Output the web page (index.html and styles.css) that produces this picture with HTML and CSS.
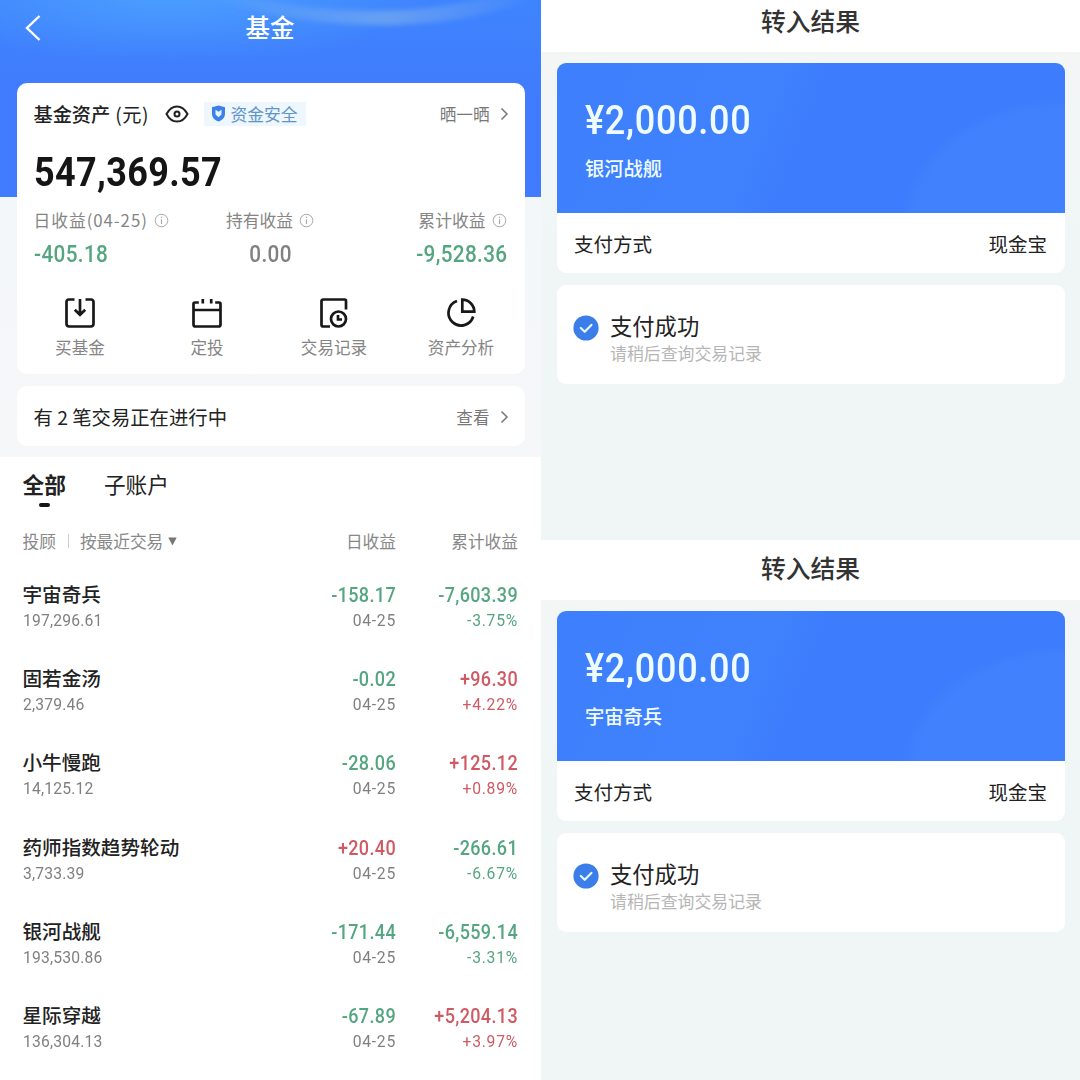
FILE: index.html
```html
<!DOCTYPE html>
<html lang="zh-CN">
<head>
<meta charset="utf-8">
<title>基金</title>
<link rel="stylesheet" href="styles.css">
</head>
<body>
<svg class="defs" width="0" height="0" aria-hidden="true">
  <symbol id="chevron" viewBox="0 0 9 14"><path d="M1.500 1.500 7 7l-5.500 5.500" fill="none" stroke="currentColor" stroke-width="1.500"/></symbol>
  <symbol id="info" viewBox="0 0 15 15"><circle cx="7.500" cy="7.500" r="6.300" fill="none" stroke="currentColor"/><path d="M7.500 6.300v4.700M7.500 3.800v1.300" stroke="currentColor" stroke-width="1.200"/></symbol>
  <symbol id="check" viewBox="0 0 26 26"><circle cx="13" cy="13" r="12.600" fill="#3b7de9"/><path d="m7.800 13 3.900 3.800 6.700-6.900" fill="none" stroke="#e8f8ff" stroke-width="2.200" stroke-linecap="round" stroke-linejoin="round"/></symbol>
</svg>
<div class="board">
  <main class="fund">
    <section class="hero">
      <svg class="hero-art" viewBox="0 0 541 197" preserveAspectRatio="none" aria-hidden="true">
        <defs>
          <radialGradient id="glow"><stop offset="0" stop-color="#4b9eff"/><stop offset="1" stop-color="#4b9eff" stop-opacity="0"/></radialGradient>
          <linearGradient id="ribbon"><stop offset="0" stop-color="#7fb2ee" stop-opacity="0"/><stop offset=".55" stop-color="#7fb2ee" stop-opacity=".6"/><stop offset="1" stop-color="#7fb2ee" stop-opacity="0"/></linearGradient>
          <filter id="soft"><feGaussianBlur stdDeviation="2.500"/></filter>
        </defs>
        <ellipse cx="170" cy="-5" rx="260" ry="68" fill="url(#glow)"/>
        <path d="M200-6Q285 25 380 25T540-6H500Q440 11 370 11T230-8Z" fill="url(#ribbon)" filter="url(#soft)"/>
      </svg>
      <header class="topbar">
        <svg class="back" viewBox="0 0 18 28"><path d="M15.500 2 3 14l12.500 12" fill="none" stroke="#fff" stroke-width="2.400"/></svg>
        <h1>基金</h1>
      </header>
      <div class="card assets">
        <div class="assets-head">
          <span class="assets-title">基金资产<span class="unit">(元)</span></span>
          <svg class="eye" viewBox="0 0 24 18"><path d="M1.500 9C4 4.300 7.600 1.400 12 1.400S20 4.300 22.500 9C20 13.700 16.400 16.600 12 16.600S4 13.700 1.500 9Z" fill="none" stroke="#222" stroke-width="2"/><circle cx="12" cy="9" r="2.500" fill="none" stroke="#222" stroke-width="2"/></svg>
          <span class="safe"><svg viewBox="0 0 15 17"><path d="M7.500.5 14 2.300v6.200c0 4.200-2.600 6.700-6.500 8C3.600 15.200 1 12.700 1 8.500V2.300Z" fill="#3c80e8"/><path d="m4.500 4.700 3 2 3-2v4.800l-3 2.700-3-2.700Z" fill="#e4f4ff"/></svg>资金安全</span>
          <a class="more">晒一晒<svg><use href="#chevron"/></svg></a>
        </div>
        <div class="total num">547,369.57</div>
        <div class="stats">
          <div class="stat"><div class="label"><span class="dated">日收益(04-25)</span><svg><use href="#info"/></svg></div><div class="value num green">-405.18</div></div>
          <div class="stat center"><div class="label">持有收益<svg><use href="#info"/></svg></div><div class="value num">0.00</div></div>
          <div class="stat right"><div class="label">累计收益<svg><use href="#info"/></svg></div><div class="value num green">-9,528.36</div></div>
        </div>
        <nav class="actions">
          <a><svg viewBox="0 0 30 30"><path d="M9.500 1.500H4a2.500 2.500 0 0 0-2.500 2.500v22A2.500 2.500 0 0 0 4 28.500h22a2.500 2.500 0 0 0 2.500-2.500V4A2.500 2.500 0 0 0 26 1.500h-5.500M15 1v15.500M9.800 11.800l5.200 5 5.200-5"/></svg>买基金</a>
          <a><svg viewBox="0 0 30 30"><path d="M6.800 4.500H3a1.500 1.500 0 0 0-1.500 1.500v20.500A2 2 0 0 0 3.500 28.500h23a2 2 0 0 0 2-2V6A1.500 1.500 0 0 0 27 4.500h-3.800M1.500 12h27M10.800 1v4.500M19.200 1v4.500"/></svg>定投</a>
          <a><svg viewBox="0 0 30 30"><path d="M27 11.500V2.800a1.300 1.300 0 0 0-1.300-1.300H4.300A1.800 1.800 0 0 0 2.500 3.300v23.400a1.800 1.800 0 0 0 1.800 1.800H11"/><circle cx="19.500" cy="21" r="7.500"/><path d="M19 17v4.500h4"/></svg>交易记录</a>
          <a><svg viewBox="0 0 30 30"><path d="M11 3A12.600 12.600 0 1 0 27.200 18.500M16.300 1.700v12h12A12 12 0 0 0 16.300 1.700Z"/></svg>资产分析</a>
        </nav>
      </div>
    </section>
    <section class="card pending"><span>有 2 笔交易正在进行中</span><a class="more">查看<svg><use href="#chevron"/></svg></a></section>
    <section class="holdings">
      <nav class="tabs"><a class="active">全部</a><a>子账户</a></nav>
      <div class="filters"><span>投顾<i class="bar"></i>按最近交易<svg class="caret" viewBox="0 0 9 9"><path d="M.3.5h8.400L4.500 8.500Z" fill="#777"/></svg></span><span>日收益</span><span>累计收益</span></div>
      <div class="row"><b>宇宙奇兵</b><strong class="green">-158.17</strong><strong class="green">-7,603.39</strong><small>197,296.61</small><small>04-25</small><small class="green">-3.75%</small></div>
      <div class="row"><b>固若金汤</b><strong class="green">-0.02</strong><strong class="red">+96.30</strong><small>2,379.46</small><small>04-25</small><small class="red">+4.22%</small></div>
      <div class="row"><b>小牛慢跑</b><strong class="green">-28.06</strong><strong class="red">+125.12</strong><small>14,125.12</small><small>04-25</small><small class="red">+0.89%</small></div>
      <div class="row"><b>药师指数趋势轮动</b><strong class="red">+20.40</strong><strong class="green">-266.61</strong><small>3,733.39</small><small>04-25</small><small class="green">-6.67%</small></div>
      <div class="row"><b>银河战舰</b><strong class="green">-171.44</strong><strong class="green">-6,559.14</strong><small>193,530.86</small><small>04-25</small><small class="green">-3.31%</small></div>
      <div class="row"><b>星际穿越</b><strong class="green">-67.89</strong><strong class="red">+5,204.13</strong><small>136,304.13</small><small>04-25</small><small class="red">+3.97%</small></div>
    </section>
  </main>
  <aside class="results">
    <section class="result first">
      <h2>转入结果</h2>
      <div class="receipt">
        <div class="banner"><div class="amount num">¥2,000.00</div><div class="product">银河战舰</div></div>
        <div class="method"><span>支付方式</span><span>现金宝</span></div>
      </div>
      <div class="status"><svg><use href="#check"/></svg><div><p>支付成功</p><p class="hint">请稍后查询交易记录</p></div></div>
    </section>
    <section class="result">
      <h2>转入结果</h2>
      <div class="receipt">
        <div class="banner"><div class="amount num">¥2,000.00</div><div class="product">宇宙奇兵</div></div>
        <div class="method"><span>支付方式</span><span>现金宝</span></div>
      </div>
      <div class="status"><svg><use href="#check"/></svg><div><p>支付成功</p><p class="hint">请稍后查询交易记录</p></div></div>
    </section>
  </aside>
</div>
</body>
</html>
```
FILE: styles.css
```css
* { box-sizing: border-box; }
body { margin: 0; font-family: "Noto Sans CJK SC", sans-serif; color: #222; background: #fff; }
h1, h2, p { margin: 0; font-weight: 500; }
svg { display: block; flex: none; }
.defs { position: absolute; }
.board { display: grid; grid-template-columns: 541px 539px; width: 1080px; height: 1080px; overflow: hidden; }

/* Figures are set narrow, with open tracking */
.num, .row strong, .row small { font-family: Roboto, "Noto Sans CJK SC", sans-serif; transform: scaleX(.9); transform-origin: left; }
.green { color: #54a580 !important; }
.red { color: #cf5a63 !important; }

.fund { background: linear-gradient(#f3f7fa, #f5f7f9 457px, #fff 457px); height: 1080px; overflow: hidden; }
.hero { position: relative; padding: 0 16.500px; background: linear-gradient(#3f84fe, #407cfd 90px, #407cfd 197px, transparent 197px); }
.hero-art { position: absolute; left: 0; top: 0; width: 541px; height: 197px; }
.topbar { position: relative; display: grid; grid-template-columns: 40px 1fr 40px; align-items: center; height: 55px; margin-bottom: 28px; }
.back { width: 18px; height: 28px; margin-left: 7px; }
.topbar h1 { text-align: center; color: #fff; font-size: 24.500px; line-height: 36px; margin: -2px 1px 0 0; }
.card { position: relative; background: #fff; border-radius: 10px; }
.assets { width: 508px; height: 291px; padding: 16px 17px 0; }
.assets-head { display: flex; align-items: center; height: 29px; }
.assets-title { width: 131px; font-size: 19.200px; font-weight: 500; white-space: nowrap; }
.unit { margin-left: 5px; font-weight: 400; letter-spacing: .5px; }
.eye { width: 24px; height: 18px; }
.safe { display: flex; align-items: center; gap: 5px; width: 102px; height: 24px; margin-left: 15px; padding-left: 7px; font-size: 16.800px; color: #6095c8; background: #eef6fe; white-space: nowrap; }
.safe svg { width: 15px; height: 17px; }
.more { display: flex; align-items: center; gap: 10px; margin-left: auto; font-size: 16.600px; color: #777; }
.more svg { width: 9px; height: 14px; margin-right: -1px; }
.total { height: 48px; margin-top: 21px; font-size: 40px; font-weight: 700; line-height: 48px; letter-spacing: .400px; color: #151515; }
.stats { display: grid; grid-template-columns: repeat(3, 1fr); margin-top: 11px; }
.stat { display: flex; flex-direction: column; align-items: flex-start; }
.center { align-items: center; }
.right { align-items: flex-end; }
.label { display: flex; align-items: center; gap: 6px; height: 24px; font-size: 16.800px; color: #858585; white-space: nowrap; }
.label svg { width: 15px; height: 15px; margin-right: 1px; color: #aaa; }
.dated { letter-spacing: .95px; }
.value { height: 30px; margin-top: 8px; font-size: 23px; line-height: 30px; font-weight: 500; letter-spacing: .400px; color: #808080; }
.center .value { transform-origin: center; }
.right .value { transform-origin: right; }
.actions { display: grid; grid-template-columns: repeat(4, 127px); margin: 28px -17px 0; }
.actions a { display: flex; flex-direction: column; align-items: center; gap: 6px; font-size: 16.600px; line-height: 26px; color: #858585; }
.actions svg { width: 30px; height: 30px; fill: none; stroke: #181818; stroke-width: 2.700; }
.pending { display: flex; align-items: center; width: 508px; height: 60px; margin: 12px 0 11px 16.500px; padding: 2px 17px 0; font-size: 19.350px; white-space: nowrap; }

.holdings { padding: 0 23px 0 22.500px; background: #fff; }
.tabs { display: flex; gap: 38px; height: 66px; padding-top: 10px; font-size: 21.700px; line-height: 34px; }
.tabs .active { display: flex; flex-direction: column; align-items: center; font-weight: 600; }
.tabs .active::after { content: ""; width: 11px; height: 4px; margin: 2px 0 0 1px; border-radius: 2px; background: #151515; }
.filters { display: grid; grid-template-columns: 1fr 110px 122px; height: 36px; font-size: 16.700px; line-height: 36px; color: #888; text-align: right; }
.filters span:first-child { display: flex; align-items: center; }
.bar { width: 1px; height: 14px; margin: 0 11px 0 12px; background: #ccc; }
.caret { width: 9px; height: 9px; margin-left: 5px; }
.row { display: grid; grid-template-columns: 1fr 110px 122px; grid-template-rows: 26px 26px; height: 84.200px; text-align: right; }
.filters + .row { margin-top: 22px; }
.row b { font-size: 19.600px; font-weight: 500; line-height: 26px; text-align: left; white-space: nowrap; }
.row strong, .row small { transform-origin: right; }
.row strong { font-size: 20px; font-weight: 500; line-height: 29px; letter-spacing: .400px; }
.row small { font-size: 16.500px; font-weight: 450; line-height: 27px; letter-spacing: .800px; color: #808080; transform: scaleX(.95); }
.row small:nth-child(4) { text-align: left; transform-origin: left; letter-spacing: .200px; }

.results { display: grid; grid-template-rows: 540px 540px; }
.result { background: linear-gradient(#f5f6f6, #f0f6f6 250px); padding: 0 15px 0 16px; overflow: hidden; }
.result h2 { height: 60px; margin: 0 -15px 11px -16px; background: #fff; font-size: 24.800px; line-height: 55px; text-align: center; color: #333; }
.first h2 { height: 52px; line-height: 41px; }
.receipt { height: 210px; overflow: hidden; border-radius: 9px; background: #fff; }
.banner { height: 150px; padding: 34px 28px 0; color: #effcff; background: radial-gradient(ellipse 165px 125px at 510px 160px, #4181fd 92%, transparent 100%), linear-gradient(112deg, #3e7ffd, #4081fd 40%, #3d7dfd 48%); }
.amount { height: 48px; font-size: 40px; line-height: 48px; letter-spacing: .800px; font-weight: 500; }
.product { margin-top: 11px; font-size: 19.300px; line-height: 25px; font-weight: 500; }
.method { display: flex; justify-content: space-between; padding: 0 18px 0 17px; font-size: 19.500px; line-height: 61px; }
.status { display: flex; height: 99px; margin-top: 12px; padding: 25px 16px; gap: 11px; border-radius: 9px; background: #fff; }
.status svg { width: 26px; height: 26px; margin-top: 5px; }
.status p { font-size: 22.300px; line-height: 30px; font-weight: 400; }
.status .hint { font-size: 16.900px; line-height: 25px; color: #b6b6b6; }
```
